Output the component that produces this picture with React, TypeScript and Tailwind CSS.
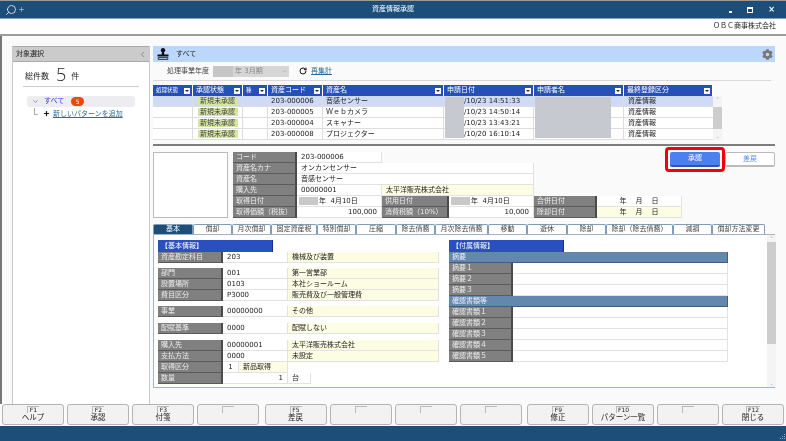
import { ChevronDown, ChevronLeft, Plus, RotateCw, Search } from "lucide-react";
import { FaCog } from "react-icons/fa";

const gridCols = [
  { label: "処理状態", w: "w-[40px]", small: true },
  { label: "承認状態", w: "w-[50px]" },
  { label: "種", w: "w-[25px]", small: true },
  { label: "資産コード", w: "w-[55px]" },
  { label: "資産名", w: "w-[121px]" },
  { label: "申請日付", w: "w-[90px]" },
  { label: "申請者名", w: "w-[90px]" },
  { label: "最終登録区分", w: "w-[89px]" },
];

const gridRows = [
  { code: "203-000006", name: "音感センサー", date: "/10/23 14:51:33", selected: true },
  { code: "203-000005", name: "Ｗｅｂカメラ", date: "/10/23 14:50:14" },
  { code: "203-000004", name: "スキャナー", date: "/10/23 13:43:21" },
  { code: "203-000008", name: "プロジェクター", date: "/10/20 16:10:14" },
];

const tabs = [
  { label: "基本", w: "w-[40px]" },
  { label: "償却", w: "w-[39px]" },
  { label: "月次償却", w: "w-[39px]" },
  { label: "固定資産税", w: "w-[46px]" },
  { label: "特別償却", w: "w-[39px]" },
  { label: "圧縮", w: "w-[40px]" },
  { label: "除去債務", w: "w-[39px]" },
  { label: "月次除去債務", w: "w-[53px]" },
  { label: "移動", w: "w-[39px]" },
  { label: "遊休", w: "w-[40px]" },
  { label: "除却", w: "w-[39px]" },
  { label: "除却（除去債務）", w: "w-[67px]" },
  { label: "減損", w: "w-[39px]" },
  { label: "償却方法変更", w: "w-[53px]" },
];

const fkeys = [
  [
    { key: "F1", label: "ヘルプ" },
    { key: "F2", label: "承認" },
    { key: "F3", label: "付箋" },
    { key: "", label: "" },
  ],
  [
    { key: "F5", label: "差戻" },
    { key: "", label: "" },
    { key: "", label: "" },
    { key: "", label: "" },
  ],
  [
    { key: "F9", label: "修正" },
    { key: "F10", label: "パターン一覧" },
    { key: "", label: "" },
    { key: "F12", label: "閉じる" },
  ],
];

function Label({ children, className = "" }: { children?: React.ReactNode; className?: string }) {
  return (
    <div
      className={`flex h-[11px] shrink-0 items-center whitespace-nowrap border-r-2 border-b border-r-[#4a4a4a] border-b-[#5a5a5a] bg-[#808080] pl-[3px] text-[7px] text-[#ececec] ${className}`}
    >
      {children}
    </div>
  );
}

function Value({ children, className = "" }: { children?: React.ReactNode; className?: string }) {
  return (
    <div
      className={`flex h-[11px] shrink-0 items-center whitespace-nowrap border-r border-b border-[#e2e2e2] px-[4px] text-[7px] text-[#222] ${className}`}
    >
      {children}
    </div>
  );
}

function BasicRow({ label, code, name }: { label: string; code: string; name: string }) {
  return (
    <div className="flex">
      <Label className="w-[65px]">{label}</Label>
      <Value className="w-[65px] bg-white">{code}</Value>
      <Value className="w-[151px] bg-[#fdfde4]">{name}</Value>
    </div>
  );
}

function Stamp() {
  return (
    <svg viewBox="0 0 12 12" className="h-[12px] w-[12px] text-[#111]" fill="currentColor">
      <circle cx="6" cy="2.2" r="2.2" />
      <path d="M5 4h2l.4 2.6H11.5v2H.5v-2h4.1z" />
      <path d="M1.2 9.6h9.6v1.8H1.2z" fill="none" stroke="currentColor" strokeWidth="0.8" />
    </svg>
  );
}

export default function App() {
  return (
    <div className="flex h-[441px] w-[786px] flex-col overflow-hidden bg-white font-['DejaVu_Sans','Noto_Sans_CJK_JP',sans-serif] text-[7px] text-[#222] blur-[0.3px]">
      {/* Title bar */}
      <div className="flex h-[19px] shrink-0 items-center border-t border-b border-t-[#9a9a9a] border-b-[#8aa0b4] bg-[#1d4e79] pl-[5px] pr-[11px] text-white">
        <Search className="h-[12px] w-[12px] -scale-x-100" strokeWidth={1.5} />
        <Plus className="ml-[1px] h-[7px] w-[7px]" strokeWidth={1.5} />
        <div className="ml-[347px] text-[7px]">資産情報承認</div>
        <div className="ml-auto flex items-center gap-[15px]">
          <span className="mt-[4px] h-[2px] w-[3px] bg-white" />
          <span className="h-[6px] w-[6px] border border-t-2 border-white" />
          <span className="text-[8px] font-bold leading-none">×</span>
        </div>
      </div>

      {/* Company */}
      <div className="flex h-[17px] shrink-0 items-center justify-end border-b-2 border-[#9c9c9c] pr-[10px] text-[7px]">
        ＯＢＣ商事株式会社
      </div>

      {/* Body */}
      <div className="flex h-[368px] shrink-0 gap-[3px] border-l-2 border-[#777] bg-[#fafafa] pl-[10px] pt-[10px]">
        {/* Left panel */}
        <div className="flex h-[358px] w-[138px] shrink-0 flex-col border-x border-[#c8c8c8] bg-white">
          <div className="flex h-[16px] shrink-0 items-center justify-between border-t border-b border-[#aaa] bg-[#cbcbcb] pl-[3px] pr-[2px] text-[7px]">
            対象選択
            <ChevronLeft className="h-[9px] w-[9px] text-[#555]" strokeWidth={1.5} />
          </div>
          <div className="mx-[10px] mt-[1px] flex h-[24px] items-end gap-[7px] border-b border-[#ccc] pb-[2px] pl-[2px]">
            <span className="mb-[1px] text-[8px]">総件数</span>
            <span className="font-['Open_Sans'] text-[18px] font-light leading-[20px]">5</span>
            <span className="-ml-[2px] mb-[1px] text-[8px]">件</span>
          </div>
          <div className="mx-[14px] mt-[9px] flex h-[11px] items-center rounded-[3px] bg-[#ececf1] pl-[5px]">
            <ChevronDown className="h-[7px] w-[7px] text-[#555]" strokeWidth={2} />
            <span className="ml-[5px] text-[7px] text-[#3a3ae6]">すべて</span>
            <span className="ml-[7px] flex h-[9px] w-[13px] items-center justify-center rounded-full bg-[#f0460f] text-[6px] text-white">
              5
            </span>
          </div>
          <div className="mt-[1px] flex pl-[21px]">
            <span className="h-[7px] w-[4px] border-b border-l border-[#aaa]" />
            <Plus className="ml-[5px] mt-[2px] h-[7px] w-[7px] text-[#111]" strokeWidth={4} />
            <span className="ml-[3px] mt-[1px] text-[7px] text-[#2f6c9e] underline">新しいパターンを追加</span>
          </div>
        </div>

        {/* Right panel */}
        <div className="flex w-[622px] shrink-0 flex-col">
          <div className="flex h-[16px] shrink-0 items-center bg-[#bbd7fb] pl-[4px] pr-[2px]">
            <Stamp />
            <span className="ml-[7px] text-[7px]">すべて</span>
            <FaCog className="ml-auto h-[11px] w-[11px] text-[#777]" />
          </div>

          <div className="mr-[4px] flex h-[19px] shrink-0 items-center border-b border-[#d8d8d8] pl-[14px]">
            <span className="text-[7px] text-[#444]">処理事業年度</span>
            <div className="ml-[4px] flex h-[11px] w-[76px] items-center bg-[#d6d6d6] text-[7px] text-[#888]">
              <span className="h-full w-[20px] bg-[#c6c6c6]" />
              <span className="ml-[2px]">年 3月期</span>
              <ChevronDown className="ml-auto mr-[2px] h-[5px] w-[5px]" />
            </div>
            <RotateCw className="ml-[10px] h-[8px] w-[8px] text-[#111]" strokeWidth={3} />
            <span className="ml-[4px] text-[7px] text-[#2f6c9e] underline">再集計</span>
          </div>

          {/* Grid */}
          <div className="mt-[4px] flex h-[11px] shrink-0">
            {gridCols.map((c) => (
              <div
                key={c.label}
                className={`${c.w} flex shrink-0 items-center justify-between whitespace-nowrap border-r border-white bg-[#2450b8] pl-[3px] pr-[2px] text-white ${c.small ? "text-[5.5px]" : "text-[7px]"}`}
              >
                {c.label}
                <span className="flex h-[6px] w-[6px] items-center justify-center bg-white">
                  <span className="border-x-[2px] border-t-[2px] border-x-transparent border-t-[#222]" />
                </span>
              </div>
            ))}
          </div>
          <div className="flex h-[44px] shrink-0">
            <div className="relative w-[560px] shrink-0">
              {gridRows.map((r) => (
                <div key={r.code} className={`flex h-[11px] border-b border-[#ddd] ${r.selected ? "bg-[#cfdaf5]" : "bg-white"}`}>
                  <div className="w-[40px] shrink-0 border-r border-[#ddd]" />
                  <div className="flex w-[50px] shrink-0 items-center justify-center border-r border-[#ddd]">
                    <span className="flex h-[8px] w-[40px] items-center justify-center bg-[#d6e6a0] text-[7px] text-[#444]">
                      新規未承認
                    </span>
                  </div>
                  <div className="w-[25px] shrink-0 border-r border-[#ddd]" />
                  <div className="flex w-[55px] shrink-0 items-center border-r border-[#ddd] pl-[3px]">{r.code}</div>
                  <div className="flex w-[121px] shrink-0 items-center border-r border-[#ddd] pl-[3px]">{r.name}</div>
                  <div className="flex w-[90px] shrink-0 items-center border-r border-[#ddd] pl-[20px]">{r.date}</div>
                  <div className="w-[90px] shrink-0 border-r border-[#ddd]" />
                  <div className="flex w-[89px] shrink-0 items-center pl-[4px]">資産情報</div>
                </div>
              ))}
              {/* masked values */}
              <div className="absolute left-[292px] top-[1px] h-[41px] w-[19px] bg-[#c6c9d0]" />
              <div className="absolute left-[382px] top-[1px] h-[41px] w-[76px] bg-[#c6c9d0]" />
            </div>
            <div className="flex h-[44px] w-[9px] shrink-0 flex-col justify-between bg-[#f4f4f4] text-center text-[5px] leading-[7px] text-[#aaa]">
              <span>⌃</span>
              <span className="h-[22px] bg-[#cdcdcd]" />
              <span>⌄</span>
            </div>
          </div>

          {/* Splitter */}
          <div className="mt-[4px] h-[2px] shrink-0 bg-[#7d7d7d]" />

          {/* Detail */}
          <div className="relative mt-[6px] flex h-[66px] shrink-0">
            <div className="h-[66px] w-[75px] shrink-0 border border-[#bbb] bg-white" />
            <div className="ml-[5px] flex flex-col">
              <div className="flex">
                <Label className="w-[64px]">コード</Label>
                <Value className="w-[85px] bg-white">203-000006</Value>
              </div>
              <div className="flex">
                <Label className="w-[64px]">資産名カナ</Label>
                <Value className="w-[237px] bg-white">オンカンセンサー</Value>
              </div>
              <div className="flex">
                <Label className="w-[64px]">資産名</Label>
                <Value className="w-[237px] bg-white">音感センサー</Value>
              </div>
              <div className="flex">
                <Label className="w-[64px]">購入先</Label>
                <Value className="w-[85px] bg-white">00000001</Value>
                <Value className="w-[152px] bg-[#fdfde4]">太平洋販売株式会社</Value>
              </div>
              <div className="flex">
                <Label className="w-[64px]">取得日付</Label>
                <Value className="w-[85px] bg-white !pl-[2px]">
                  <span className="mr-[1px] h-[8px] w-[19px] bg-[#c8c8c8]" />年&nbsp;&nbsp;4月10日
                </Value>
                <Label className="w-[67px]">供用日付</Label>
                <Value className="w-[85px] bg-white !pl-[2px]">
                  <span className="mr-[1px] h-[8px] w-[19px] bg-[#c8c8c8]" />年&nbsp;&nbsp;4月10日
                </Value>
                <Label className="w-[63px]">合併日付</Label>
                <Value className="w-[85px] justify-center gap-[9px] bg-white">
                  <span>年</span>
                  <span>月</span>
                  <span>日</span>
                </Value>
              </div>
              <div className="flex">
                <Label className="w-[64px] text-[6.5px]">取得価額（税抜）</Label>
                <Value className="w-[85px] justify-end bg-white">100,000</Value>
                <Label className="w-[67px]">消費税額（10%）</Label>
                <Value className="w-[85px] justify-end bg-white">10,000</Value>
                <Label className="w-[63px]">除却日付</Label>
                <Value className="w-[85px] justify-center gap-[9px] bg-[#fdfde4]">
                  <span>年</span>
                  <span>月</span>
                  <span>日</span>
                </Value>
              </div>
            </div>
            <div className="absolute right-0 top-0 flex">
              <div className="absolute -left-[5px] -top-[5px] h-[25px] w-[60px] rounded-[4px] border-[3px] border-[#ee0010]" />
              <div className="flex h-[15px] w-[50px] items-center justify-center rounded-[2px] border-b-2 border-b-[#2c55a8] bg-[#4a80f0] text-[7px] text-white">
                承認
              </div>
              <div className="ml-[5px] flex h-[15px] w-[50px] items-center justify-center rounded-[2px] border border-b-2 border-[#bbb] bg-white text-[7px] text-[#5a8cf0]">
                差戻
              </div>
            </div>
          </div>

          {/* Tabs */}
          <div className="mt-[6px] flex h-[10px] shrink-0">
            {tabs.map((t, i) => (
              <div
                key={t.label}
                className={`${t.w} flex shrink-0 items-center justify-center whitespace-nowrap rounded-t-[2px] border-x border-t border-[#7f9db9] text-[7px] ${i === 0 ? "bg-[#1d4e79] text-white" : "bg-white text-[#444]"}`}
              >
                {t.label}
              </div>
            ))}
          </div>

          {/* Tab content */}
          <div className="flex h-[154px] shrink-0 border border-[#9fb4c8] bg-white">
            <div className="w-[287px] shrink-0 pl-[4px] pt-[5px]">
              <div className="flex h-[12px] w-[115px] items-center border-r border-[#16308a] bg-[#2a50c0] pl-[3px] text-[7px] text-white">
                【基本情報】
              </div>
              <BasicRow label="資産勘定科目" code="203" name="機械及び装置" />
              <div className="mt-[5px]">
                <BasicRow label="部門" code="001" name="第一営業部" />
                <BasicRow label="設置場所" code="0103" name="本社ショールーム" />
                <BasicRow label="費目区分" code="P3000" name="販売費及び一般管理費" />
              </div>
              <div className="mt-[5px]">
                <BasicRow label="事業" code="00000000" name="その他" />
              </div>
              <div className="mt-[6px]">
                <BasicRow label="配賦基準" code="0000" name="配賦しない" />
              </div>
              <div className="mt-[6px]">
                <BasicRow label="購入先" code="00000001" name="太平洋販売株式会社" />
                <BasicRow label="支払方法" code="0000" name="未設定" />
                <div className="flex">
                  <Label className="w-[65px]">取得区分</Label>
                  <Value className="w-[16px] justify-center bg-white !px-0">1</Value>
                  <Value className="w-[49px] bg-[#fdfde4]">新品取得</Value>
                </div>
                <div className="flex">
                  <Label className="w-[65px]">数量</Label>
                  <Value className="w-[65px] justify-end bg-white">1</Value>
                  <Value className="w-[23px] bg-white">台</Value>
                </div>
              </div>
            </div>
            <div className="ml-[8px] w-[318px] shrink-0 pt-[5px]">
              <div className="flex h-[12px] w-[115px] items-center border-r border-[#16308a] bg-[#2a50c0] pl-[3px] text-[7px] text-white">
                【付属情報】
              </div>
              <div className="w-[279px]">
                <div className="flex h-[11px] items-center border-r border-b border-[#3f5f80] bg-[#6488ad] pl-[3px] text-[#eef]">摘要</div>
                {["摘要１", "摘要２", "摘要３"].map((l) => (
                  <div key={l} className="flex">
                    <Label className="w-[64px]">{l}</Label>
                    <Value className="w-[215px] bg-white" />
                  </div>
                ))}
                <div className="flex h-[11px] items-center border-r border-b border-[#3f5f80] bg-[#6488ad] pl-[3px] text-[#eef]">確認書類等</div>
                {["確認書類１", "確認書類２", "確認書類３", "確認書類４", "確認書類５"].map((l) => (
                  <div key={l} className="flex">
                    <Label className="w-[64px]">{l}</Label>
                    <Value className="w-[215px] bg-white" />
                  </div>
                ))}
              </div>
            </div>
            <div className="ml-auto flex w-[9px] shrink-0 flex-col bg-[#f4f4f4] text-center text-[5px] leading-[7px] text-[#aaa]">
              <span>⌃</span>
              <span className="h-[102px] bg-[#cdcdcd]" />
              <span className="mt-auto">⌄</span>
            </div>
          </div>
        </div>
      </div>

      {/* Function keys */}
      <div className="flex h-[22px] shrink-0 justify-between bg-[#fafafa] px-[2px]">
        {fkeys.map((group, gi) => (
          <div key={gi} className="flex gap-[3px]">
            {group.map((k, i) => (
              <div
                key={i}
                className="flex h-[21px] w-[62px] flex-col items-center rounded-[3px] border border-[#b4b4b4] bg-[#f2f2f2]"
              >
                <span className="mt-[1px] flex h-[7px] min-w-[12px] items-center justify-center border-t border-l border-[#bbb] px-[1px] text-[6px] leading-none">
                  {k.key}
                </span>
                <span className="text-[7.5px] leading-[10px]">{k.label}</span>
              </div>
            ))}
          </div>
        ))}
      </div>

      {/* Status bar */}
      <div className="relative h-[16px] shrink-0 border-b border-[#8a9aa8] bg-[#1d4e79]">
        <svg viewBox="0 0 6 6" className="absolute bottom-[1px] right-[1px] h-[6px] w-[6px] text-[#9ab]" fill="currentColor">
          <path d="M5 0h1v1H5zM3 2h1v1H3zM5 2h1v1H5zM1 4h1v1H1zM3 4h1v1H3zM5 4h1v1H5z" />
        </svg>
      </div>
    </div>
  );
}
